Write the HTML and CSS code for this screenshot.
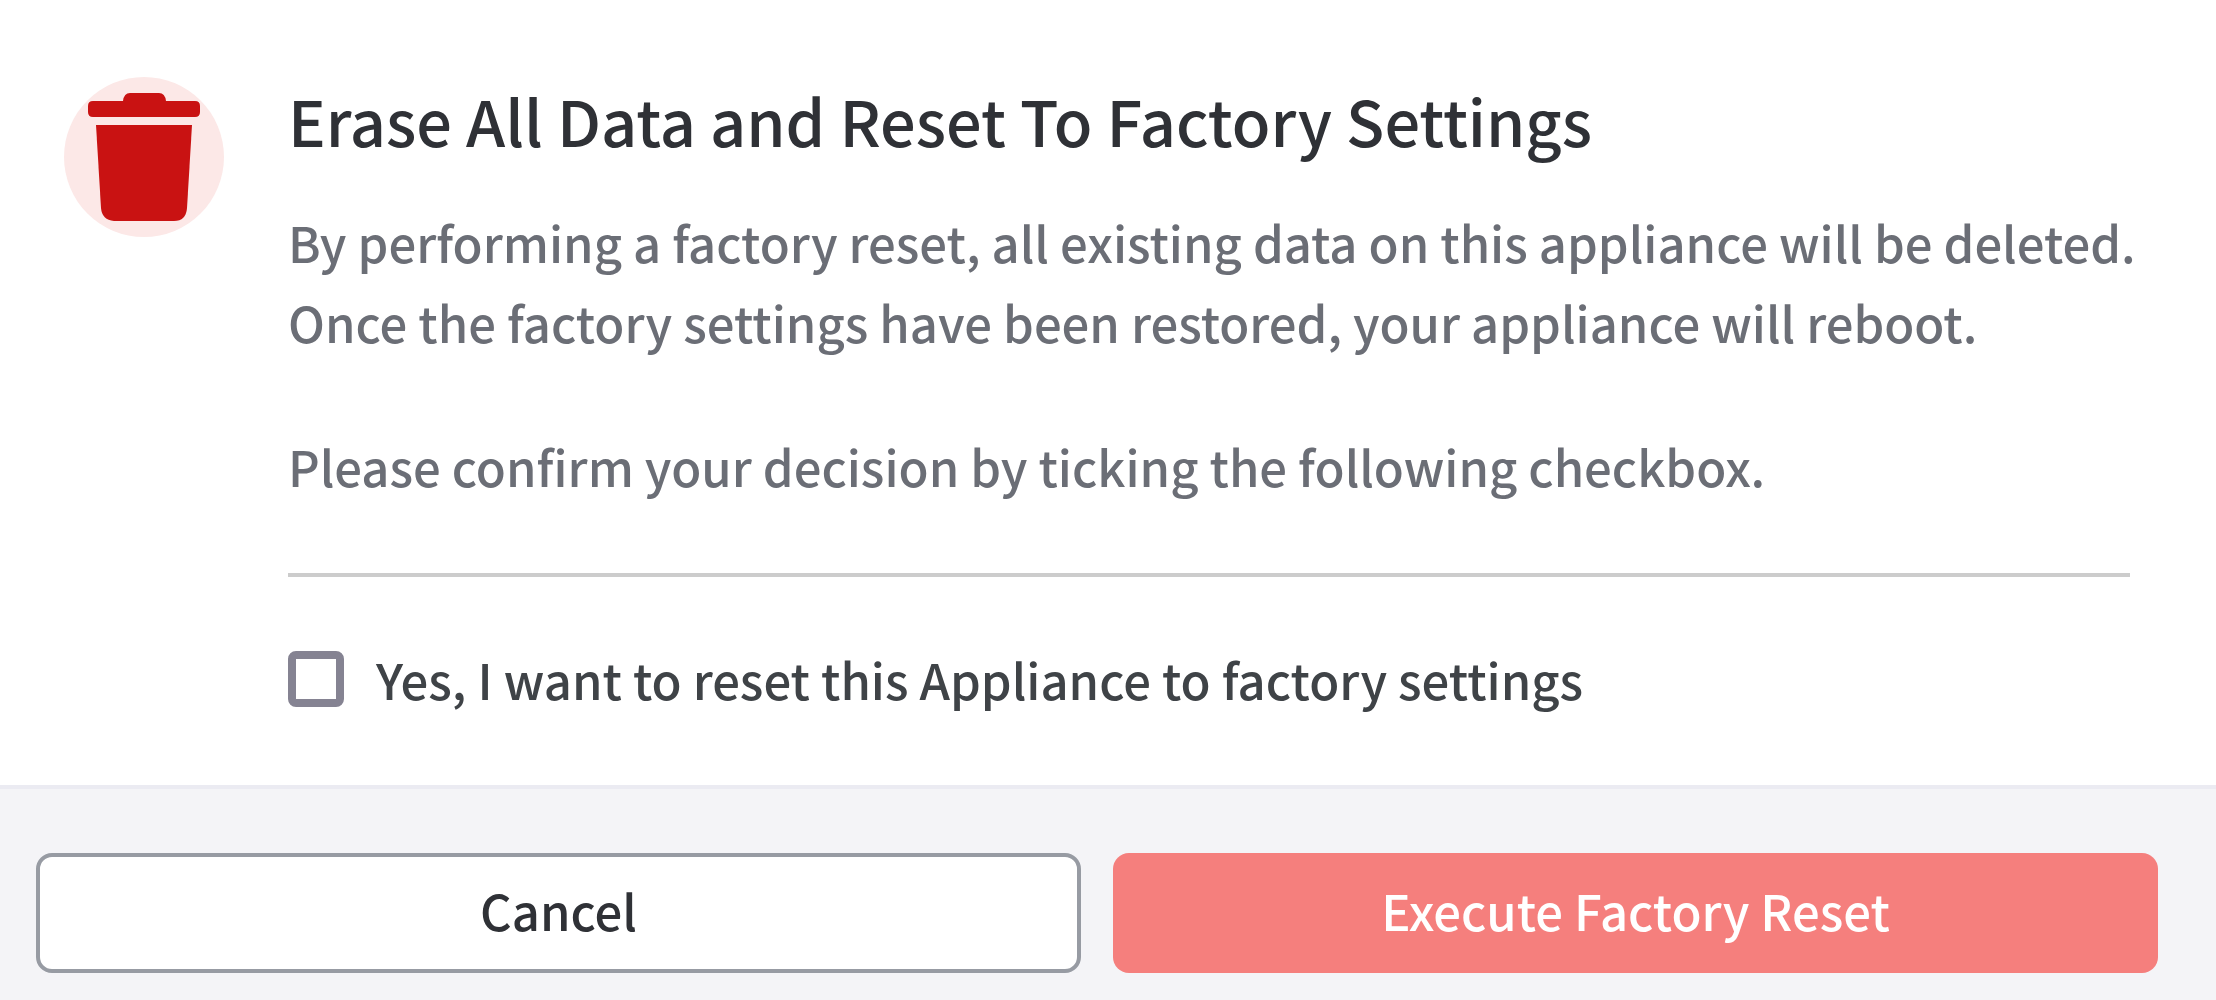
FILE: index.html
```html
<!DOCTYPE html>
<html lang="en">
<head>
    <meta charset="utf-8">
    <title>Factory Reset</title>
    <meta name="viewport" content="width=device-width, initial-scale=1.0">
    <link rel="stylesheet" href="styles.css">
</head>
<body>
    <form class="dialog">
        <div class="dialog-body">
            <div class="icon-circle">
                <svg class="trash-icon" viewBox="0 0 112 128" aria-hidden="true">
                    <path d="M5 8h30q1-8 7-8h29q6 0 7 8h29q5 0 5 5v6q0 5-5 5H5q-5 0-5-5v-6q0-5 5-5z"/>
                    <path d="M8 32h96l-5 83q-1 13-13 13H26q-12-1-13-13z"/>
                </svg>
            </div>
            <div class="content">
                <h1>Erase All Data and Reset To Factory Settings</h1>
                <p>By performing a factory reset, all existing data on this appliance will be deleted.<br>Once the factory settings have been restored, your appliance will reboot.</p>
                <p>Please confirm your decision by ticking the following checkbox.</p>
                <div class="confirm">
                    <input type="checkbox" id="confirmReset">
                    <label for="confirmReset">Yes, I want to reset this Appliance to factory settings</label>
                </div>
            </div>
        </div>
        <div class="dialog-footer">
            <button type="button" class="btn btn-cancel">Cancel</button>
            <button type="submit" class="btn btn-danger">Execute Factory Reset</button>
        </div>
    </form>
</body>
</html>
```
FILE: styles.css
```css
* {
    box-sizing: border-box;
    margin: 0;
    padding: 0;
}

body {
    font-family: "Noto Sans CJK SC", "Noto Sans", sans-serif;
    font-weight: 500;
    background-color: #fff;
    color: #3f4347;
}

.dialog {
    display: flex;
    flex-direction: column;
    min-height: 100vh;
}

.dialog-body {
    display: flex;
    align-items: flex-start;
    gap: 64px;
    padding: 77px 86px 66px 64px;
}

.icon-circle {
    flex: none;
    display: flex;
    align-items: center;
    justify-content: center;
    width: 160px;
    height: 160px;
    border-radius: 50%;
    background-color: #fce8e7;
}

.trash-icon {
    width: 112px;
    height: 128px;
    fill: #c91212;
}

.content {
    flex: 1;
    min-width: 0;
}

h1 {
    font-size: 63px;
    font-weight: 500;
    line-height: 86px;
    margin-bottom: 39px;
    color: #2f3136;
}

p {
    font-size: 49px;
    line-height: 80px;
    margin-bottom: 64px;
    color: #6b6e76;
}

.confirm {
    display: flex;
    align-items: center;
    gap: 32px;
    margin-top: 67px;
    padding-top: 62px;
    border-top: 4px solid #ccc;
    font-size: 49px;
    line-height: 80px;
}

.confirm input {
    appearance: none;
    width: 56px;
    height: 56px;
    border: 8px solid #858392;
    border-radius: 8px;
}

.dialog-footer {
    flex: 1;
    display: grid;
    grid-template-columns: 1fr 1fr;
    align-items: start;
    gap: 32px;
    padding: 64px 58px 27px 36px;
    border-top: 4px solid #ebebf2;
    background-color: #f4f4f7;
}

.btn {
    height: 120px;
    padding-bottom: 8px;
    border-radius: 16px;
    font: inherit;
    font-size: 49px;
}

.btn-cancel {
    border: 4px solid #979ba3;
    background-color: #fff;
    color: #2f3136;
}

.btn-danger {
    border: 0;
    background-color: #f57f7d;
    color: #fff;
}

/* Keep the warning on its own lines when there is room */
@media screen and (min-width: 2200px) {
    p {
        white-space: nowrap;
    }
}
```
